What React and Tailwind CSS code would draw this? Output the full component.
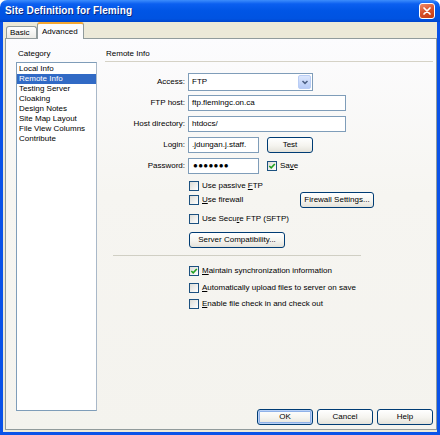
import React from 'react';

const categories = [
  'Local Info',
  'Remote Info',
  'Testing Server',
  'Cloaking',
  'Design Notes',
  'Site Map Layout',
  'File View Columns',
  'Contribute',
];

function Checkbox({ checked }) {
  return (
    <div className="w-[10px] h-[10px] shrink-0 border border-[#1c5180] bg-[linear-gradient(135deg,#dcdcd7,#ffffff)] flex items-center justify-center">
      {checked && (
        <svg width="8" height="8" viewBox="0 0 8 8">
          <path d="M1.3 4 L3.2 5.9 L6.8 2" fill="none" stroke="#21a121" strokeWidth="1.6" />
        </svg>
      )}
    </div>
  );
}

function XpButton({ children, className = '', isDefault = false }) {
  return (
    <div
      className={
        'h-[16px] shrink-0 rounded-[3px] border border-[#003c74] bg-[linear-gradient(180deg,#ffffff_0%,#f5f4ef_55%,#e4e2da_100%)] flex items-center justify-center text-[8px] leading-none text-black ' +
        (isDefault ? 'shadow-[inset_0_0_0_1px_#b9d1f6,inset_0_0_0_2px_#8fb1e8] ' : '') +
        className
      }
    >
      {children}
    </div>
  );
}

function Field({ label, children }) {
  return (
    <div className="flex items-center">
      <div className="w-[80px] text-right text-[8px] leading-none">{label}</div>
      <div className="ml-[3px] flex items-center">{children}</div>
    </div>
  );
}

function TextBox({ value, width }) {
  return (
    <div
      className="h-[16px] border border-[#7f9db9] bg-white px-[3px] flex items-center text-[8px] leading-none whitespace-nowrap overflow-hidden"
      style={{ width }}
    >
      {value}
    </div>
  );
}

function CheckRow({ checked, children, className = '' }) {
  return (
    <div className={'flex items-center h-[10px] ' + className}>
      <Checkbox checked={checked} />
      <span className="ml-[3px] text-[8px] leading-none whitespace-nowrap">{children}</span>
    </div>
  );
}

export default function App() {
  return (
    <div className="w-[440px] h-[435px] flex flex-col font-['Liberation_Sans',Arial,sans-serif] text-black select-none">
      {/* title bar */}
      <div className="h-[22px] shrink-0 rounded-t-[7px] bg-[linear-gradient(180deg,#3d8dfc_0%,#0b5ff0_18%,#0055e5_50%,#0053e1_85%,#0045cc_100%)] flex items-center pl-[5px] pr-[5px]">
        <span className="text-white font-bold text-[10px] tracking-[0.1px] leading-none [text-shadow:1px_1px_0_#0a2a80]">
          Site Definition for Fleming
        </span>
        <div className="ml-auto w-[16px] h-[16px] rounded-[3px] border border-white bg-[linear-gradient(160deg,#ef8b6a_0%,#d8512a_50%,#c23a12_100%)] flex items-center justify-center">
          <svg width="10" height="10" viewBox="0 0 10 10">
            <path d="M2 2 L8 8 M8 2 L2 8" stroke="white" strokeWidth="1.7" strokeLinecap="round" />
          </svg>
        </div>
      </div>

      {/* body */}
      <div className="flex-1 flex flex-col bg-[#ece9d8] border-x-[3px] border-b-[3px] border-[#0a52e8]">
        {/* tabs */}
        <div className="h-[16px] shrink-0 flex items-end pl-[3px]">
          <div className="h-[12px] w-[31px] rounded-t-[3px] border border-b-0 border-[#919b9c] bg-[linear-gradient(180deg,#ffffff,#ecebe6)] flex items-center pl-[3px] text-[8px] leading-none">
            Basic
          </div>
          <div className="relative z-10 -mb-[1px] h-[17px] w-[47px] rounded-t-[3px] border-x border-[#919b9c] border-t-[2px] border-t-[#f4a732] bg-[#fcfcfe] flex items-center pl-[4px] text-[8px] leading-none">
            Advanced
          </div>
        </div>

        {/* tab panel */}
        <div className="flex-1 ml-[2px] mb-[2px] flex border border-[#919b9c] bg-[linear-gradient(180deg,#fcfcfe_0%,#f6f5f1_40%,#f4f3ee_100%)]">
          {/* left column */}
          <div className="flex flex-col pl-[10px] pt-[10px]">
            <div className="h-[10px] flex items-center pl-[2px] text-[8px] leading-none">Category</div>
            <div className="mt-[3px] w-[81px] h-[349px] border border-[#7f9db9] border-r-[#a9b8c8] bg-white pt-[1px]">
              {categories.map((c) => (
                <div
                  key={c}
                  className={
                    'h-[10px] flex items-center pl-[2px] text-[8px] leading-none whitespace-nowrap ' +
                    (c === 'Remote Info' ? 'bg-[#316ac5] text-white' : '')
                  }
                >
                  {c}
                </div>
              ))}
            </div>
          </div>

          {/* right column */}
          <div className="flex-1 flex flex-col ml-[8px] pr-[3px] pt-[10px] pb-[4px]">
            <div className="h-[10px] flex items-center pl-[1px] text-[8px] leading-none">Remote Info</div>
            <div className="mt-[2px] h-px bg-[#d5d2c6]" />

            <div className="mt-[11px]">
              <Field label="Access:">
                <div className="w-[125px] h-[18px] border border-[#7f9db9] bg-white flex items-center pl-[3px] pr-[1px]">
                  <span className="text-[8px] leading-none">FTP</span>
                  <div className="ml-auto w-[13px] h-[14px] rounded-[2px] border border-[#b9cdf5] bg-[linear-gradient(180deg,#dce7fd,#b7cbf7)] flex items-center justify-center">
                    <svg width="8" height="8" viewBox="0 0 8 8">
                      <path d="M1.5 3 L4 5.4 L6.5 3" fill="none" stroke="#4d6185" strokeWidth="1.5" />
                    </svg>
                  </div>
                </div>
              </Field>
            </div>
            <div className="mt-[4px]">
              <Field label="FTP host:">
                <TextBox value="ftp.flemingc.on.ca" width={158} />
              </Field>
            </div>
            <div className="mt-[5px]">
              <Field label="Host directory:">
                <TextBox value="htdocs/" width={158} />
              </Field>
            </div>
            <div className="mt-[5px]">
              <Field label="Login:">
                <TextBox value=".jdungan.j.staff." width={71} />
                <XpButton className="ml-[8px] w-[46px]">Test</XpButton>
              </Field>
            </div>
            <div className="mt-[5px]">
              <Field label="Password:">
                <div className="w-[71px] h-[16px] border border-[#7f9db9] bg-white px-[4px] flex items-center text-[8px] leading-none tracking-[0.3px]">
                  ●●●●●●●
                </div>
                <div className="ml-[8px]">
                  <CheckRow checked>
                    Sa<span className="underline">v</span>e
                  </CheckRow>
                </div>
              </Field>
            </div>

            <CheckRow className="mt-[7px] pl-[84px]">
              Use passive <span className="underline">F</span>TP
            </CheckRow>
            <div className="mt-[1px] h-[16px] flex items-center pl-[84px]">
              <div className="w-[111px]">
                <CheckRow>
                  <span className="underline">U</span>se firewall
                </CheckRow>
              </div>
              <XpButton className="w-[74px]">Firewall Settings...</XpButton>
            </div>
            <CheckRow className="mt-[6px] pl-[84px]">
              Use Secu<span className="underline">r</span>e FTP (SFTP)
            </CheckRow>
            <XpButton className="mt-[8px] ml-[84px] w-[96px]">Server Compatibility...</XpButton>

            <div className="mt-[7px] ml-[8px] w-[248px] h-px bg-[#d0cfc4]" />

            <CheckRow checked className="mt-[10px] pl-[84px]">
              <span className="underline">M</span>aintain synchronization information
            </CheckRow>
            <CheckRow className="mt-[7px] pl-[84px]">
              <span className="underline">A</span>utomatically upload files to server on save
            </CheckRow>
            <CheckRow className="mt-[6px] pl-[84px]">
              <span className="underline">E</span>nable file check in and check out
            </CheckRow>

            <div className="flex-1" />

            <div className="flex justify-end gap-[4px]">
              <XpButton isDefault className="w-[56px]">OK</XpButton>
              <XpButton className="w-[56px]">Cancel</XpButton>
              <XpButton className="w-[56px]">Help</XpButton>
            </div>
          </div>
        </div>
      </div>
    </div>
  );
}
